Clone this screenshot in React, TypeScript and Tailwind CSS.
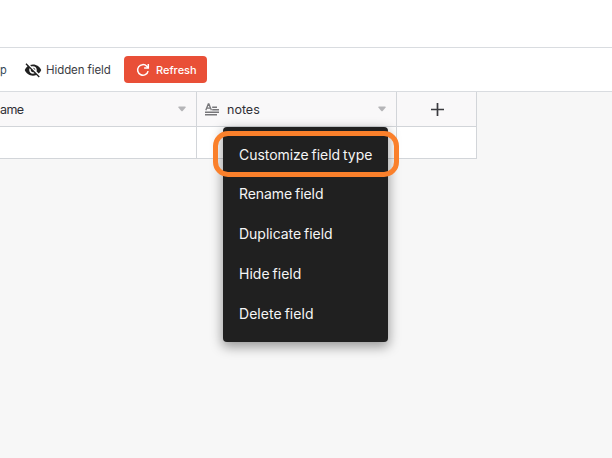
import React from "react";
import { MdVisibilityOff } from "react-icons/md";

type MenuItem = { label: string; style: string };

const menuItems: MenuItem[] = [
  { label: "Customize field type", style: "h-[39px] pt-[2px] tracking-[-0.04px]" },
  { label: "Rename field", style: "h-10 tracking-[-0.06px]" },
  { label: "Duplicate field", style: "h-10 tracking-[-0.02px]" },
  { label: "Hide field", style: "h-10 tracking-[0.02px]" },
  { label: "Delete field", style: "h-10 tracking-[0.04px]" },
];

function RefreshIcon() {
  return (
    <svg width="14" height="14" viewBox="0 0 14 14" fill="none" stroke="#fff" strokeWidth="1.5">
      <path d="M12.1 8.1A5.3 5.3 0 1 1 10.8 3.3L12.2 4.8" />
      <path d="M12.3 1V5.1H8.1" />
    </svg>
  );
}

function TextTypeIcon() {
  return (
    <svg width="14" height="13" viewBox="0 0 14 13" fill="none" stroke="#77777a" strokeWidth="1.3">
      <path d="M.8 7.2 3.3 1h.6l2.5 6.2M1.7 5.2h3.8" />
      <path d="M7.2 4.2H12M7.2 6.7H14M0 9.2h14M0 11.8h12" strokeWidth="1.6" />
    </svg>
  );
}

function Caret() {
  return (
    <svg width="8" height="6" viewBox="0 0 8 6" fill="#b5b5b8">
      <path d="M1 .5h6q1 0 .6 1L4.7 5q-.7.7-1.4 0L.4 1.5Q0 .5 1 .5Z" />
    </svg>
  );
}

function FieldMenu() {
  return (
    <div className="absolute left-[223px] top-[127px] h-[215px] w-[165px] rounded bg-[#202020] pt-[7px] shadow-[0_4px_12px_1px_rgba(0,0,0,0.38)]">
      {menuItems.map((item) => (
        <div
          key={item.label}
          className={`flex items-center whitespace-nowrap pl-4 text-[14px] text-[#f5f5f5] [word-spacing:-1px] ${item.style}`}
        >
          {item.label}
        </div>
      ))}
      <div className="absolute -left-[10px] top-1 h-[46px] w-[186px] rounded-[15px] border-[5px] border-[#fa802b]" />
    </div>
  );
}

export default function App() {
  return (
    <div className="relative flex h-[458px] w-[612px] flex-col overflow-hidden bg-[#f7f7f7] font-['Inter','Liberation_Sans',sans-serif] text-[#303036]">
      <header className="h-12 shrink-0 border-b border-[#d9dce0] bg-white" />
      <div className="flex h-11 shrink-0 items-center border-b border-[#d9dce0] bg-white text-[11px]">
        <span className="w-6 pt-0.5 text-[#344858]">p</span>
        <MdVisibilityOff size={18} color="#202020" />
        <span className="ml-1 w-[78px] whitespace-nowrap pt-0.5 text-[11.5px] tracking-[-0.08px] text-[#3c3c44]">Hidden field</span>
        <button className="flex h-[27px] w-[83px] items-center rounded-[4px] bg-[#e94f37] pl-3 text-[11px] font-medium text-white">
          <RefreshIcon />
          <span className="ml-[6px] pt-px">Refresh</span>
        </button>
      </div>
      <div className="grid w-[477px] grid-cols-[197px_200px_80px] grid-rows-[35px_32px]">
        <div className="flex items-center justify-between border-b border-r border-[#d2d5d9] bg-[#f9f8f9] pr-[10px] text-[12.5px]">
          <span className="pt-0.5 tracking-[-0.6px]">ame</span>
          <Caret />
        </div>
        <div className="flex items-center border-b border-r border-[#d2d5d9] bg-[#f9f8f9] pl-2 pr-[10px] text-[12.5px]">
          <TextTypeIcon />
          <span className="ml-2 flex-1 pt-0.5">notes</span>
          <Caret />
        </div>
        <div className="flex items-center justify-center border-b border-r border-[#d2d5d9] bg-[#f9f8f9] pl-px">
          <svg width="13" height="13" viewBox="0 0 13 13" stroke="#3b3b3f" strokeWidth="1.7">
            <path d="M6.5 0v13M0 6.5h13" />
          </svg>
        </div>
        <div className="border-b border-r border-[#d2d5d9] bg-white" />
        <div className="border-b border-r border-[#d2d5d9] bg-white" />
        <div className="border-b border-r border-[#d2d5d9] bg-white" />
      </div>
      <FieldMenu />
    </div>
  );
}
